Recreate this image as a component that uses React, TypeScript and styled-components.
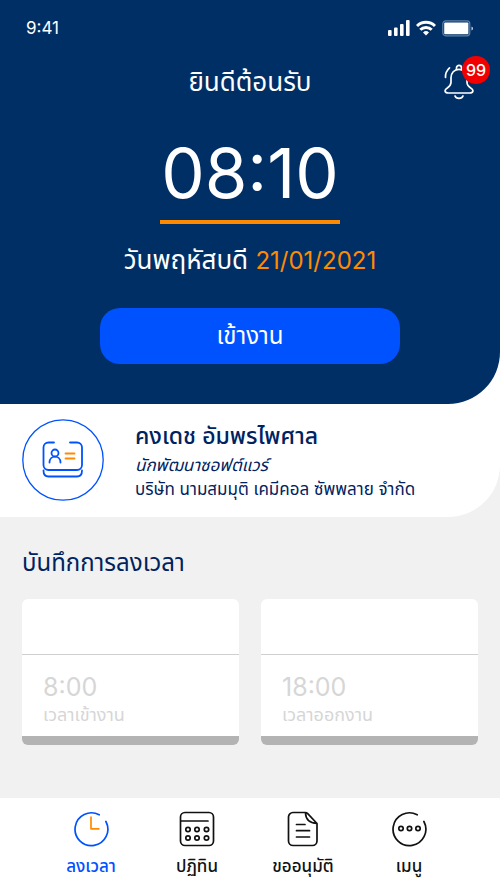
import React from "react";
import styled, { createGlobalStyle } from "styled-components";

const navy = "#002f66";
const ink = "#00235f";
const blue = "#0052ff";
const orange = "#ff8a00";

const GlobalStyle = createGlobalStyle`
  *, *::before, *::after { box-sizing: border-box; }
  body {
    margin: 0;
    background: #f1f1f1;
    font-family: Inter, "Noto Sans Thai", "Noto Sans", sans-serif;
    color: ${ink};
  }
  h1, h2, p { margin: 0; font-weight: 400; }
  button { font-family: inherit; border: 0; padding: 0; cursor: pointer; }
  svg { display: block; fill: none; stroke-linecap: round; stroke-linejoin: round; }
`;

const Screen = styled.div`
  display: flex;
  flex-direction: column;
  min-height: 100vh;
`;

const Top = styled.div`
  background: #fff;
  border-bottom-right-radius: 52px;
`;

const Hero = styled.header`
  display: flex;
  flex-direction: column;
  align-items: center;
  padding-bottom: 40px;
  background: ${navy};
  color: #fff;
  border-bottom-right-radius: 52px;
`;

const StatusBar = styled.div`
  display: flex;
  align-items: center;
  justify-content: space-between;
  width: 100%;
  height: 56px;
  padding: 0 26px;
  font-size: 17px;
  line-height: 24px;
`;

const StatusIcons = styled.div`
  display: flex;
  align-items: center;
  gap: 6px;
`;

const TitleBar = styled.div`
  display: grid;
  grid-template-columns: 1fr auto 1fr;
  align-items: center;
  width: 100%;
  height: 52px;
  padding: 0 26px;
`;

const Title = styled.h1`
  grid-column: 2;
  font-size: 26px;
  line-height: 36px;
`;

const BellButton = styled.button`
  position: relative;
  justify-self: end;
  background: none;
  color: #fff;
`;

const Badge = styled.span`
  position: absolute;
  top: -8px;
  right: -16px;
  width: 28px;
  height: 28px;
  border-radius: 50%;
  background: #f00000;
  font-size: 16px;
  font-weight: 500;
  line-height: 28px;
  text-align: center;
`;

const Clock = styled.time`
  display: flex;
  justify-content: center;
  width: 180px;
  margin-top: 24px;
  padding-bottom: 6px;
  border-bottom: 4px solid ${orange};
  font-size: 69px;
  line-height: 82px;
  white-space: nowrap;
`;

const DateLine = styled.p`
  margin-top: 18px;
  font-size: 26px;
  line-height: 36px;
`;

const DateValue = styled.time`
  color: ${orange};
  font-size: 24px;
  line-height: 24px;
`;

const CheckIn = styled.button`
  width: 60%;
  height: 56px;
  margin-top: 30px;
  border-radius: 20px;
  background: ${blue};
  color: #fff;
  font-size: 24px;
  line-height: 32px;
`;

const Profile = styled.section`
  display: flex;
  align-items: center;
  gap: 31px;
  padding: 15px 22px 16px;
`;

const Person = styled.div`
  display: flex;
  flex-direction: column;
`;

const Name = styled.h2`
  font-size: 23px;
  font-weight: 500;
  line-height: 34px;
`;

const Detail = styled.p<{ $italic?: boolean }>`
  font-size: 17px;
  line-height: 24px;
  font-style: ${(p) => (p.$italic ? "italic" : "normal")};
`;

const Log = styled.main`
  flex: 1;
  padding: 28px 22px;
`;

const LogTitle = styled.h2`
  font-size: 24px;
  line-height: 36px;
`;

const Cards = styled.div`
  display: grid;
  grid-template-columns: 1fr 1fr;
  gap: 22px;
  margin-top: 18px;
`;

const Card = styled.article`
  overflow: hidden;
  border-radius: 6px;
  border-bottom: 9px solid #b3b3b3;
  background: #fff;
  color: #d6d6d6;
`;

const CardHead = styled.div`
  height: 56px;
  border-bottom: 1px solid #d0d0d0;
`;

const CardBody = styled.div`
  padding: 16px 21px 9px;
`;

const CardTime = styled.p`
  font-size: 25px;
  line-height: 32px;
`;

const CardLabel = styled.p`
  font-size: 18px;
  line-height: 24px;
`;

const Nav = styled.nav`
  display: grid;
  grid-template-columns: repeat(4, 1fr);
  padding: 13px 38px 10px;
  background: #fff;
`;

const NavItem = styled.a<{ $active?: boolean }>`
  display: flex;
  flex-direction: column;
  align-items: center;
  gap: 5px;
  color: ${(p) => (p.$active ? blue : "#111")};
  font-size: 17px;
  font-weight: 500;
  line-height: 28px;
  text-decoration: none;
`;

const SignalIcon = () => (
  <svg width="22" height="16" viewBox="0 0 22 16" aria-hidden="true">
    <g fill="#fff">
      <rect x="0" y="10" width="3.600" height="6" rx="1" />
      <rect x="6" y="7.500" width="3.600" height="8.500" rx="1" />
      <rect x="12" y="4" width="3.600" height="12" rx="1" />
      <rect x="18" y="0" width="3.600" height="16" rx="1" />
    </g>
  </svg>
);

const WifiIcon = () => (
  <svg width="20" height="16" viewBox="0 0 20 16" aria-hidden="true">
    <g stroke="#fff" strokeWidth="3" strokeLinecap="butt">
      <path d="M1 6a12.800 12.800 0 0 1 18 0" />
      <path d="M4.300 9.800a8.100 8.100 0 0 1 11.400 0" />
    </g>
    <path fill="#fff" d="M7 12.500a4.300 4.300 0 0 1 6 0L10 15.500z" />
  </svg>
);

const BatteryIcon = () => (
  <svg width="32" height="17" viewBox="0 0 32 17" aria-hidden="true">
    <rect x=".8" y=".8" width="27" height="15" rx="3" stroke="#5f83a6" strokeWidth="1.200" />
    <rect x="2.200" y="2.400" width="24.200" height="11.800" rx="1" fill="#fff" />
    <path d="M29.500 6.500v4c2-.8 2-3.200 0-4z" fill="#c9d5e0" />
  </svg>
);

const BellIcon = () => (
  <svg width="30" height="36" viewBox="0 0 30 36" stroke="currentColor" strokeWidth="1.700" aria-hidden="true">
    <path d="M12.500 5.500V3.800a2.500 2.500 0 0 1 5 0v1.700" />
    <path d="M15 5.300c-4.800 0-8 3.700-8 8.500v4.500c0 3-1.700 4.400-3.700 5.600-3.600 2.200-2.500 5.100.9 5.100h21.600c3.400 0 4.500-2.900.9-5.100-2-1.200-3.700-2.600-3.700-5.600v-4.500c0-4.800-3.200-8.500-8-8.500z" />
    <path d="M11 32c1.200 3.100 6.800 3.100 8 0" />
    <path d="M5.500 3.800C2.700 6.300 1.300 9.600 1.500 13.500" />
  </svg>
);

const IdCardIcon = () => (
  <svg width="82" height="82" viewBox="0 0 82 82" stroke={blue} strokeWidth="1.800" aria-hidden="true">
    <circle cx="41" cy="41" r="40.200" strokeWidth="1.300" />
    <path d="M32 23.500h-5.500a5 5 0 0 0-5 5v17.500a5 5 0 0 0 5 5h28.500a5 5 0 0 0 5-5V28.500a5 5 0 0 0-5-5H48" />
    <path d="M21.500 51.500c0 4 2 6 5 6h28.500c3 0 5-2 5-6" />
    <circle cx="33" cy="34" r="3.500" />
    <path d="M27.500 43.500c0-7.800 11-7.800 11 0" />
    <path d="M43.500 34.500h9M43.500 39.500h9" stroke={orange} />
  </svg>
);

const ClockIcon = () => (
  <svg width="36" height="36" viewBox="0 0 36 36" stroke="currentColor" strokeWidth="1.700" aria-hidden="true">
    <path d="M26.200 3.800A16.400 16.400 0 1 0 32.900 10.500" />
    <path d="M18 5.500V17.800h8.500" stroke={orange} strokeLinecap="butt" />
  </svg>
);

const CalendarIcon = () => (
  <svg width="36" height="36" viewBox="0 0 36 36" stroke="currentColor" strokeWidth="1.700" aria-hidden="true">
    <rect x="1.500" y="1.500" width="33" height="33" rx="4.500" />
    <path d="M2 10h27" />
    {[18.500, 27].map((y) =>
      [9, 18, 27.500].map((x) => <circle key={`${x}-${y}`} cx={x} cy={y} r="2.200" />)
    )}
  </svg>
);

const DocumentIcon = () => (
  <svg width="36" height="36" viewBox="0 0 36 36" stroke="currentColor" strokeWidth="1.700" aria-hidden="true">
    <path d="M20.500 1.500H8a4.500 4.500 0 0 0-4.500 4.500v24A4.500 4.500 0 0 0 8 34.500h19.500A4.500 4.500 0 0 0 32 30V12.500L22.500 2.300c-.8-.7-1.300-.8-2-.8 0 6.700 4 10.500 11.500 11" />
    <path d="M11.500 13.500H20M11.500 19.700h13M11.500 26h13" />
  </svg>
);

const MenuIcon = () => (
  <svg width="36" height="36" viewBox="0 0 36 36" stroke="currentColor" strokeWidth="1.700" aria-hidden="true">
    <path d="M26.200 3.800A16.400 16.400 0 1 0 32.900 10.500" />
    {[10, 18.500, 27].map((x) => (
      <circle key={x} cx={x} cy="17.500" r="2.200" />
    ))}
  </svg>
);

const records = [
  { time: "8:00", label: "เวลาเข้างาน" },
  { time: "18:00", label: "เวลาออกงาน" },
];

const tabs = [
  { label: "ลงเวลา", Icon: ClockIcon, active: true },
  { label: "ปฏิทิน", Icon: CalendarIcon },
  { label: "ขออนุมัติ", Icon: DocumentIcon },
  { label: "เมนู", Icon: MenuIcon },
];

export default function App() {
  return (
    <>
      <GlobalStyle />
      <Screen>
        <Top>
          <Hero>
            <StatusBar>
              <span>9:41</span>
              <StatusIcons>
                <SignalIcon />
                <WifiIcon />
                <BatteryIcon />
              </StatusIcons>
            </StatusBar>
            <TitleBar>
              <Title>ยินดีต้อนรับ</Title>
              <BellButton type="button">
                <BellIcon />
                <Badge>99</Badge>
              </BellButton>
            </TitleBar>
            <Clock>08:10</Clock>
            <DateLine>
              วันพฤหัสบดี <DateValue dateTime="2021-01-21">21/01/2021</DateValue>
            </DateLine>
            <CheckIn type="button">เข้างาน</CheckIn>
          </Hero>
          <Profile>
            <IdCardIcon />
            <Person>
              <Name>คงเดช อัมพรไพศาล</Name>
              <Detail $italic>นักพัฒนาซอฟต์แวร์</Detail>
              <Detail>บริษัท นามสมมุติ เคมีคอล ซัพพลาย จำกัด</Detail>
            </Person>
          </Profile>
        </Top>
        <Log>
          <LogTitle>บันทึกการลงเวลา</LogTitle>
          <Cards>
            {records.map((r) => (
              <Card key={r.label}>
                <CardHead />
                <CardBody>
                  <CardTime>{r.time}</CardTime>
                  <CardLabel>{r.label}</CardLabel>
                </CardBody>
              </Card>
            ))}
          </Cards>
        </Log>
        <Nav>
          {tabs.map(({ label, Icon, active }) => (
            <NavItem key={label} href="#" $active={active}>
              <Icon />
              {label}
            </NavItem>
          ))}
        </Nav>
      </Screen>
    </>
  );
}
